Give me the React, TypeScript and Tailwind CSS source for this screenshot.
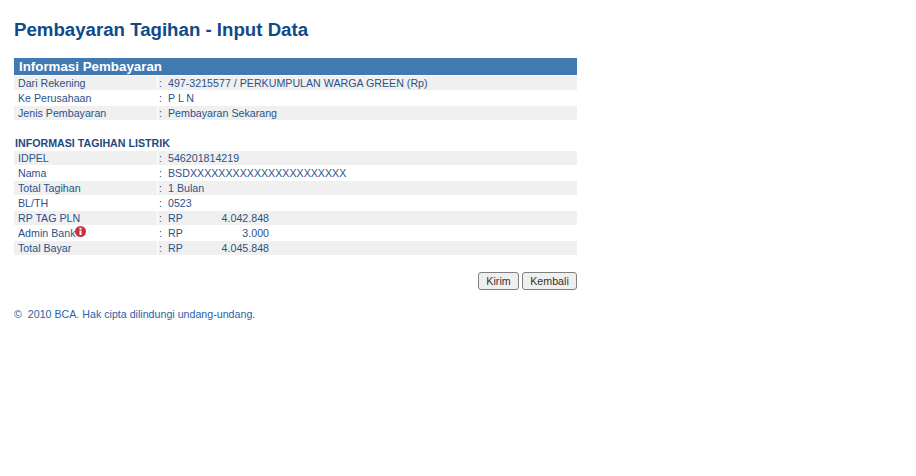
const infoRows = [
  { label: "Dari Rekening", value: "497-3215577 / PERKUMPULAN WARGA GREEN (Rp)" },
  { label: "Ke Perusahaan", value: "P L N" },
  { label: "Jenis Pembayaran", value: "Pembayaran Sekarang" },
];

const billRows = [
  { label: "IDPEL", value: "546201814219" },
  { label: "Nama", value: "BSDXXXXXXXXXXXXXXXXXXXXXX" },
  { label: "Total Tagihan", value: "1 Bulan" },
  { label: "BL/TH", value: "0523" },
  { label: "RP TAG PLN", amount: "4.042.848" },
  { label: "Admin Bank", amount: "3.000", alert: true },
  { label: "Total Bayar", amount: "4.045.848" },
];

type RowData = { label: string; value?: string; amount?: string; alert?: boolean };

function AlertIcon() {
  return (
    <svg width="11" height="11" viewBox="0 0 11 11" className="shrink-0 -mt-[3px]">
      <circle cx="5.5" cy="5.5" r="5.5" fill="#c9303e" />
      <rect x="4.5" y="1.8" width="2" height="1.8" fill="#fff" />
      <rect x="4.5" y="4.6" width="2" height="4.4" fill="#fff" />
    </svg>
  );
}

function Row({ row, shaded }: { row: RowData; shaded: boolean }) {
  return (
    <div className="flex h-[14px] mb-px leading-[14px] text-[10.66px] text-[#2b5289]">
      <div className={`w-[143px] pl-1 flex items-center ${shaded ? "bg-[#f0f0f0]" : ""}`}>
        {row.label}
        {row.alert && <AlertIcon />}
      </div>
      <div className={`flex-1 ml-px flex pl-[1px] ${shaded ? "bg-[#f0f0f0]" : ""}`}>
        <span className="w-[9px]">:</span>
        {row.amount ? (
          <>
            <span className="w-[20px]">RP</span>
            <span className="w-[81px] text-right">{row.amount}</span>
          </>
        ) : (
          <span>{row.value}</span>
        )}
      </div>
    </div>
  );
}

export default function App() {
  return (
    <div className="min-h-[476px] bg-white pl-[14px] pt-[20px] font-['Liberation_Sans',Arial,sans-serif]">
      <h1 className="h-[38px] text-[18.67px] leading-[20px] font-bold text-[#0f4a8a]">
        Pembayaran Tagihan - Input Data
      </h1>
      <div className="w-[563px]">
        <div className="h-[17px] mb-px bg-[#4179b3] pl-[5px] text-[13.33px] leading-[17px] font-bold text-white">
          Informasi Pembayaran
        </div>
        {infoRows.map((row, i) => (
          <Row key={row.label} row={row} shaded={i % 2 === 0} />
        ))}
        <div className="mt-[16px] pl-[1px] h-[15px] text-[10.66px] leading-[15px] font-bold text-[#1f4a80]">
          INFORMASI TAGIHAN LISTRIK
        </div>
        {billRows.map((row, i) => (
          <Row key={row.label} row={row} shaded={i % 2 === 0} />
        ))}
        <div className="flex justify-end gap-[3px] mt-[17px]">
          <button className="h-[18px] w-[41px] rounded-[3px] border border-[#808080] bg-[#efefef] text-[10.66px] leading-none text-[#333]">
            Kirim
          </button>
          <button className="h-[18px] w-[55px] rounded-[3px] border border-[#808080] bg-[#efefef] text-[10.66px] leading-none text-[#333]">
            Kembali
          </button>
        </div>
      </div>
      <p className="mt-[17px] text-[10.66px] leading-[15px] text-[#2c5fa8]">©&nbsp; 2010 BCA. Hak cipta dilindungi undang-undang.</p>
    </div>
  );
}
